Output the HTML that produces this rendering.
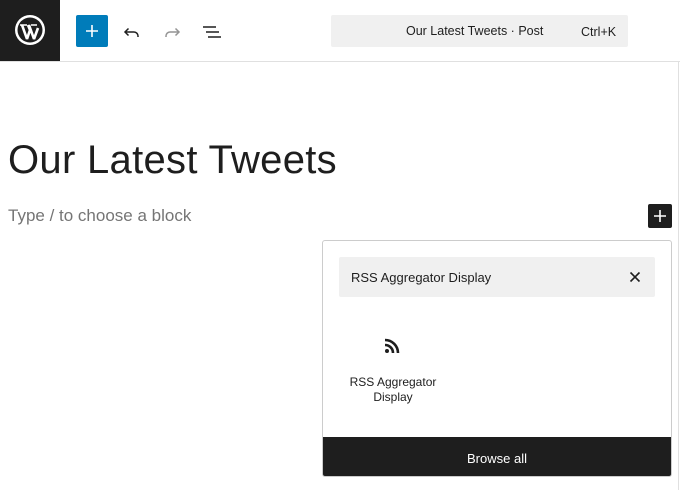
<html><head><style>
body{margin:0;width:680px;height:490px;background:#fff;font-family:"Liberation Sans",sans-serif;position:relative;overflow:hidden;color:#1e1e1e}
.a{position:absolute}
</style></head><body>
<div class="a" style="left:0;top:0;width:680px;height:61px;border-bottom:1px solid #e0e0e0"></div>
<div class="a" style="left:0;top:0;width:60px;height:61px;background:#1e1e1e"></div>
<svg class="a" style="left:14px;top:14px" width="32" height="32" viewBox="0 0 32 32"><circle cx="16" cy="16" r="15" fill="#fff"/><circle cx="16" cy="16" r="12.5" fill="#1e1e1e"/><path d="M6 11h7M17 11h6" stroke="#fff" stroke-width="1.6"/><path d="M8 11l5 14 3-9-2-5M15 11l5 14 4-11" stroke="#fff" stroke-width="2.6" fill="none" stroke-linejoin="bevel"/></svg>
<div class="a" style="left:76px;top:15px;width:32px;height:32px;background:#007cba;border-radius:2px"></div>
<svg class="a" style="left:84px;top:23px" width="16" height="16"><path d="M8 2v12M2 8h12" stroke="#fff" stroke-width="1.6"/></svg>
<svg class="a" style="left:120px;top:20px" width="24" height="24"><path d="M8.5 8.5L5 12l3.5 3.5" stroke="#1e1e1e" stroke-width="1.5" fill="none"/><path d="M5 12h9a4 4 0 0 1 4 4v1" stroke="#1e1e1e" stroke-width="1.5" fill="none"/></svg>
<svg class="a" style="left:160px;top:20px" width="24" height="24"><path d="M15.5 8.5L19 12l-3.5 3.5" stroke="#949494" stroke-width="1.5" fill="none"/><path d="M19 12h-9a4 4 0 0 0-4 4v1" stroke="#949494" stroke-width="1.5" fill="none"/></svg>
<svg class="a" style="left:200px;top:20px" width="24" height="24"><path d="M3 7h13M6 12h13M8 17h13" stroke="#1e1e1e" stroke-width="1.5"/></svg>
<div class="a" style="left:331px;top:15px;width:297px;height:32px;background:#f0f0f0;border-radius:2px;font-size:12.5px"><span class="a" style="left:75px;top:9px">Our Latest Tweets · Post</span><span class="a" style="left:250px;top:10px">Ctrl+K</span></div>
<div class="a" style="left:678px;top:62px;width:1px;height:428px;background:#e0e0e0"></div>
<div class="a" style="left:8px;top:138px;font-size:40px;letter-spacing:0.3px">Our Latest Tweets</div>
<div class="a" style="left:8px;top:206px;font-size:17px;color:#757575">Type / to choose a block</div>
<div class="a" style="left:648px;top:204px;width:24px;height:24px;background:#1e1e1e;border-radius:2px"></div>
<svg class="a" style="left:652px;top:208px" width="16" height="16"><path d="M8 2v12M2 8h12" stroke="#fff" stroke-width="1.6"/></svg>
<div class="a" style="left:322px;top:240px;width:348px;height:235px;border:1px solid #ccc;border-radius:3px;overflow:hidden">
<div class="a" style="left:16px;top:16px;width:316px;height:40px;background:#f0f0f0;border-radius:2px;font-size:13px"><span class="a" style="left:12px;top:13px">RSS Aggregator Display</span>
<svg class="a" style="left:288px;top:12px" width="16" height="16"><path d="M3.5 3.5l9 9M12.5 3.5l-9 9" stroke="#1e1e1e" stroke-width="1.6"/></svg></div>
<svg class="a" style="left:61px;top:97px" width="16" height="16" viewBox="0 0 16 16"><circle cx="3" cy="13" r="2" fill="#1e1e1e"/><path d="M1 7a8 8 0 0 1 8 8M1 2a13 13 0 0 1 13 13" stroke="#1e1e1e" stroke-width="2.6" fill="none"/></svg>
<div class="a" style="left:10px;top:134px;width:120px;text-align:center;font-size:12px;line-height:15px">RSS Aggregator<br>Display</div>
<div class="a" style="left:0;top:196px;width:348px;height:39px;background:#1e1e1e;color:#fff;font-size:13px;text-align:center;line-height:43px">Browse all</div>
</div>
</body></html>
